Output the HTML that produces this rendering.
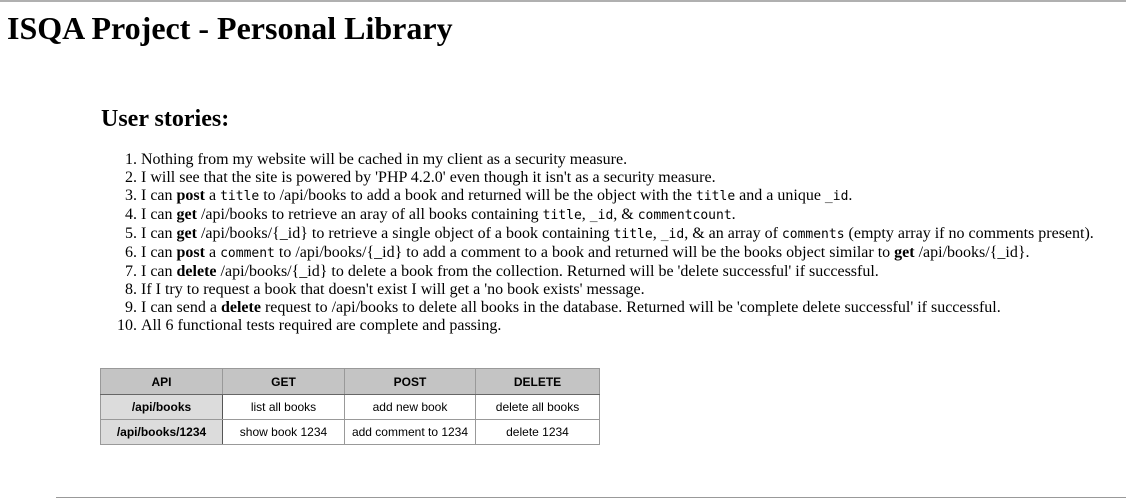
<!DOCTYPE html>
<html><head><style>
html,body{margin:0;padding:0;background:#fff;}
body{width:1126px;height:499px;position:relative;overflow:hidden;font-family:"Liberation Serif",serif;color:#000;border-top:2px solid #b0b0b0;box-sizing:border-box;}
h1{position:absolute;left:7px;top:8px;margin:0;font-size:32px;line-height:36px;font-weight:bold;}
h2{position:absolute;left:101px;top:103px;margin:0;font-size:24px;line-height:28px;font-weight:bold;}
ol{position:absolute;left:101px;top:149px;margin:0;padding-left:40px;font-size:16px;line-height:18px;}
code{font-family:"DejaVu Sans Mono",monospace;font-size:13px;}
.t{position:absolute;left:100px;top:366px;border-collapse:collapse;font-family:"Liberation Sans",sans-serif;font-size:12px;}
.t td{border:1px solid #999;text-align:center;padding:0;height:24px;}
.t tr:first-child td{background:#c4c4c4;font-weight:bold;height:25px;border-bottom:1px solid #666;}
.t td.a{background:#dcdcdc;font-weight:bold;border-right:1px solid #555;}
.hr{position:absolute;left:56px;right:0;top:495px;border-top:1px solid #999;}
</style></head><body>
<h1>ISQA Project - Personal Library</h1>
<h2>User stories:</h2>
<ol>
<li>Nothing from my website will be cached in my client as a security measure.</li>
<li>I will see that the site is powered by 'PHP 4.2.0' even though it isn't as a security measure.</li>
<li>I can <b>post</b> a <code>title</code> to /api/books to add a book and returned will be the object with the <code>title</code> and a unique <code>_id</code>.</li>
<li>I can <b>get</b> /api/books to retrieve an aray of all books containing <code>title</code>, <code>_id</code>, &amp; <code>commentcount</code>.</li>
<li>I can <b>get</b> /api/books/{_id} to retrieve a single object of a book containing <code>title</code>, <code>_id</code>, &amp; an array of <code>comments</code> (empty array if no comments present).</li>
<li>I can <b>post</b> a <code>comment</code> to /api/books/{_id} to add a comment to a book and returned will be the books object similar to <b>get</b> /api/books/{_id}.</li>
<li>I can <b>delete</b> /api/books/{_id} to delete a book from the collection. Returned will be 'delete successful' if successful.</li>
<li>If I try to request a book that doesn't exist I will get a 'no book exists' message.</li>
<li>I can send a <b>delete</b> request to /api/books to delete all books in the database. Returned will be 'complete delete successful' if successful.</li>
<li>All 6 functional tests required are complete and passing.</li>
</ol>
<table class="t">
<tr><td style="width:121px">API</td><td style="width:121px">GET</td><td style="width:130px">POST</td><td style="width:123px">DELETE</td></tr>
<tr><td class="a">/api/books</td><td>list all books</td><td>add new book</td><td>delete all books</td></tr>
<tr><td class="a">/api/books/1234</td><td>show book 1234</td><td>add comment to 1234</td><td>delete 1234</td></tr>
</table>
<div class="hr"></div>
</body></html>
